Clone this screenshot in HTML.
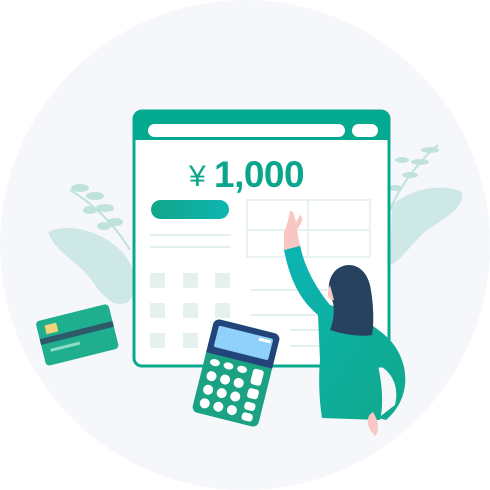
<!DOCTYPE html><html><head><style>body{margin:0;background:#fff}svg{display:block}</style></head><body>
<svg width="490" height="490" viewBox="0 0 490 490" xmlns="http://www.w3.org/2000/svg">
<defs>
<linearGradient id="g1" x1="0" x2="1"><stop offset="0" stop-color="#10a689"/><stop offset="1" stop-color="#0fb6b2"/></linearGradient>
<linearGradient id="g2" x1="0" x2="1" y1="0" y2="1"><stop offset="0" stop-color="#0bb5b4"/><stop offset="1" stop-color="#10a88a"/></linearGradient>
</defs>
<circle cx="245" cy="245" r="245" fill="#f5f7fa"/>
<path d="M48 232 C70 222 100 232 118 248 C135 262 140 290 128 302 C112 310 100 292 90 278 C78 262 55 252 48 232Z" fill="#cde8e6"/>
<g stroke="#bfe2dc" stroke-width="2" fill="#bfe2dc">
<path d="M70 190 C95 205 115 225 130 250" fill="none"/>
<ellipse cx="80" cy="188" rx="8" ry="3"/><ellipse cx="95" cy="196" rx="8" ry="3"/><ellipse cx="105" cy="208" rx="8" ry="3"/><ellipse cx="115" cy="222" rx="7" ry="3"/><ellipse cx="90" cy="210" rx="6" ry="3"/><ellipse cx="104" cy="226" rx="6" ry="3"/>
</g>
<path d="M392 205 C410 190 440 182 462 192 C465 210 440 220 425 232 C410 245 400 262 390 265Z" fill="#cde8e6"/>
<g fill="#bfe2dc">
<ellipse cx="430" cy="150" rx="9" ry="3"/><ellipse cx="420" cy="162" rx="9" ry="3"/><ellipse cx="410" cy="175" rx="8" ry="3"/><ellipse cx="402" cy="160" rx="7" ry="3"/><ellipse cx="395" cy="188" rx="7" ry="3"/>
</g>
<path d="M438 145 C420 160 400 185 390 210" stroke="#bfe2dc" stroke-width="2" fill="none"/>
<g transform="rotate(-14 77 336)">
<rect x="40" y="312" width="75" height="46" rx="4" fill="#1fae8e"/>
<rect x="40" y="330" width="75" height="6" fill="#2d5a6a"/>
<rect x="48" y="318" width="12" height="9" rx="1" fill="#f2d37a"/>
<rect x="48" y="342" width="30" height="3" fill="#8fdcc8"/>
</g>
<rect x="134" y="111" width="255" height="255" rx="8" fill="#fff" stroke="#0aa88d" stroke-width="3"/>
<path d="M134 140 V119 a8 8 0 0 1 8 -8 H381 a8 8 0 0 1 8 8 V140Z" fill="#03aa8f"/>
<rect x="148" y="124" width="197" height="13" rx="6.5" fill="#fff"/>
<rect x="352" y="124" width="26" height="13" rx="6.5" fill="#fff"/>
<text x="189" y="186" font-family="Liberation Sans,sans-serif" font-size="30" fill="#0aa58c">¥</text>
<text x="214" y="187" font-family="Liberation Sans,sans-serif" font-weight="bold" font-size="37" fill="#0aa58c" letter-spacing="-0.5">1,000</text>
<rect x="151" y="200" width="78" height="19" rx="9.5" fill="url(#g1)"/>
<g stroke="#e2f0ee" stroke-width="2"><line x1="150" y1="235" x2="231" y2="235"/><line x1="150" y1="247" x2="231" y2="247"/>
<line x1="251" y1="290" x2="330" y2="290"/><line x1="251" y1="315" x2="320" y2="315"/><line x1="290" y1="330" x2="320" y2="330"/><line x1="290" y1="346" x2="320" y2="346"/></g>
<g fill="#e4f1ef">
<rect x="150" y="273" width="15" height="15"/><rect x="183" y="273" width="15" height="15"/><rect x="215" y="273" width="15" height="15"/>
<rect x="150" y="303" width="15" height="15"/><rect x="183" y="303" width="15" height="15"/><rect x="215" y="303" width="15" height="15"/>
<rect x="150" y="333" width="15" height="15"/><rect x="183" y="333" width="15" height="15"/>
</g>
<g fill="none" stroke="#e0efec" stroke-width="1.5"><rect x="247" y="200" width="123" height="57"/><line x1="308" y1="200" x2="308" y2="257"/><line x1="247" y1="230" x2="370" y2="230"/></g>
<path d="M284 250 C290 280 300 300 318 315 L320 360 C318 385 320 405 322 418 L380 420 C385 400 380 375 378 365 C390 370 400 385 395 405 L378 418 L386 420 C410 400 412 365 390 340 C370 320 345 310 330 305 C318 290 305 270 300 245Z" fill="url(#g2)"/>
<path d="M284 250 L300 246 L297 230 C302 222 304 218 300 215 L296 222 C294 215 293 210 290 211 C289 218 287 225 284 232Z" fill="#f8c6c3"/>
<path d="M373 412 C378 420 380 430 375 436 L370 430 C366 420 368 415 373 412Z" fill="#f8c6c3"/>
<path d="M336 270 C348 260 365 265 370 285 C374 305 374 325 372 335 C362 337 345 335 330 330 C334 320 336 305 330 295 C327 285 330 276 336 270Z" fill="#27425f"/>
<path d="M330 285 C326 295 328 300 334 300 Z" fill="#f8c6c3"/>
<g transform="rotate(14 236 373)">
<rect x="202" y="325" width="68" height="96" rx="6" fill="#1aa283"/>
<path d="M202 331 a6 6 0 0 1 6 -6 H264 a6 6 0 0 1 6 6 V360 H202Z" fill="#23447a"/>
<rect x="208" y="331" width="56" height="22" rx="2" fill="#8fd1f8"/>
<rect x="250" y="333" width="12" height="3" fill="#fff"/>
<g fill="#fff">
<ellipse cx="213" cy="368" rx="5" ry="3.5"/><ellipse cx="227" cy="368" rx="5" ry="3.5"/><ellipse cx="241" cy="368" rx="5" ry="3.5"/>
<circle cx="213" cy="382" r="5"/><circle cx="227" cy="382" r="5"/><circle cx="241" cy="382" r="5"/>
<circle cx="213" cy="396" r="5"/><circle cx="227" cy="396" r="5"/><circle cx="241" cy="396" r="5"/>
<circle cx="213" cy="410" r="5"/><circle cx="227" cy="410" r="5"/><circle cx="241" cy="410" r="5"/>
<rect x="252" y="364" width="11" height="16" rx="3"/><rect x="252" y="384" width="11" height="10" rx="3"/><rect x="252" y="398" width="11" height="8" rx="3"/><rect x="252" y="409" width="11" height="8" rx="3"/>
</g></g>
</svg>
</body></html>
